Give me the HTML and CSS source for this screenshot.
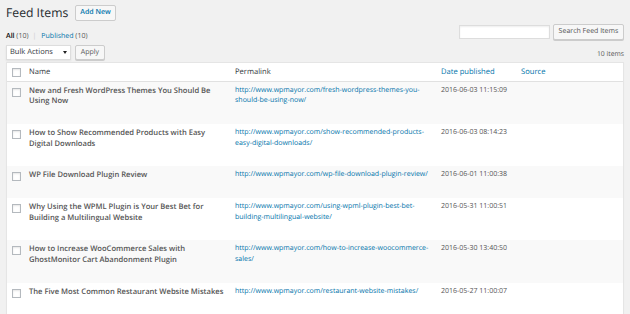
FILE: index.html
```html
<!DOCTYPE html>
<html lang="en">
<head>
<meta charset="utf-8">
<title>Feed Items</title>
<link rel="stylesheet" href="styles.css">
</head>
<body>
<div class="wrap">
  <div class="title-row">
    <h1 class="page-title">Feed Items</h1>
    <a class="title-action" href="#">Add New</a>
  </div>

  <div class="filter-row">
    <ul class="views">
      <li><a class="current" href="#">All <span class="count">(10)</span></a><span class="sep">|</span></li>
      <li><a href="#">Published <span class="count">(10)</span></a></li>
    </ul>
    <form class="search-box">
      <input class="search-input" type="search" aria-label="Search">
      <button class="button search-button" type="button">Search Feed Items</button>
    </form>
  </div>

  <div class="tablenav">
    <div class="bulk">
      <div class="select-wrap">
        <select class="bulk-select" aria-label="Bulk actions">
          <option>Bulk Actions</option>
        </select>
      </div>
      <button class="button apply-button" type="button">Apply</button>
    </div>
    <div class="displaying">10 items</div>
  </div>

  <table class="list-table">
    <colgroup>
      <col class="col-cb">
      <col class="col-name">
      <col class="col-link">
      <col class="col-date">
      <col>
    </colgroup>
    <thead>
      <tr>
        <th class="cb"><input class="check" type="checkbox" aria-label="Select all"></th>
        <th>Name</th>
        <th>Permalink</th>
        <th><a href="#">Date published</a></th>
        <th><a href="#">Source</a></th>
      </tr>
    </thead>
    <tbody>
      <tr>
        <td class="cb"><input class="check" type="checkbox"></td>
        <td class="title">New and Fresh WordPress Themes You Should Be Using Now</td>
        <td class="link"><a href="#">http://www.wpmayor.com/fresh-wordpress-themes-you-should-be-using-now/</a></td>
        <td class="date">2016-06-03 11:15:09</td>
        <td></td>
      </tr>
      <tr>
        <td class="cb"><input class="check" type="checkbox"></td>
        <td class="title">How to Show Recommended Products with Easy Digital Downloads</td>
        <td class="link"><a href="#">http://www.wpmayor.com/show-recommended-products-easy-digital-downloads/</a></td>
        <td class="date">2016-06-03 08:14:23</td>
        <td></td>
      </tr>
      <tr>
        <td class="cb"><input class="check" type="checkbox"></td>
        <td class="title">WP File Download Plugin Review</td>
        <td class="link"><a href="#">http://www.wpmayor.com/wp-file-download-plugin-review/</a></td>
        <td class="date">2016-06-01 11:00:38</td>
        <td></td>
      </tr>
      <tr>
        <td class="cb"><input class="check" type="checkbox"></td>
        <td class="title">Why Using the WPML Plugin is Your Best Bet for Building a Multilingual Website</td>
        <td class="link"><a href="#">http://www.wpmayor.com/using-wpml-plugin-best-bet-building-multilingual-website/</a></td>
        <td class="date">2016-05-31 11:00:51</td>
        <td></td>
      </tr>
      <tr>
        <td class="cb"><input class="check" type="checkbox"></td>
        <td class="title">How to Increase WooCommerce Sales with GhostMonitor Cart Abandonment Plugin</td>
        <td class="link"><a href="#">http://www.wpmayor.com/how-to-increase-woocommerce-sales/</a></td>
        <td class="date">2016-05-30 13:40:50</td>
        <td></td>
      </tr>
      <tr>
        <td class="cb"><input class="check" type="checkbox"></td>
        <td class="title">The Five Most Common Restaurant Website Mistakes</td>
        <td class="link"><a href="#">http://www.wpmayor.com/restaurant-website-mistakes/</a></td>
        <td class="date">2016-05-27 11:00:07</td>
        <td></td>
      </tr>
    </tbody>
  </table>
</div>
</body>
</html>
```

FILE: styles.css
```css
* { box-sizing: border-box; }

html, body {
  margin: 0;
  padding: 0;
  background: #f1f1f1;
}

body {
  font-family: "Open Sans", "Liberation Sans", sans-serif;
  font-size: 7px;
  line-height: 11px;
  color: #444;
  overflow: hidden;
  text-rendering: geometricPrecision;
}

a { color: #0073aa; text-decoration: none; }

.wrap {
  padding: 5px 6px 0 6px;
}

/* title */
.title-row {
  display: flex;
  align-items: center;
  gap: 7px;
  height: 16px;
}

.page-title {
  margin: 0;
  font-size: 12.2px;
  line-height: 16px;
  font-weight: 400;
  color: #23282d;
}

.title-action {
  display: block;
  height: 16px;
  line-height: 14px;
  padding: 0 4px;
  border: 1px solid #ccc;
  border-radius: 2px;
  background: #f7f7f7;
  font-weight: 600;
  font-size: 7px;
  color: #0073aa;
}

/* views + search */
.filter-row {
  display: flex;
  justify-content: space-between;
  align-items: flex-start;
  margin-top: 3px;
  height: 17px;
}

.views {
  list-style: none;
  margin: 0;
  padding: 8px 0 0 0;
  display: flex;
  line-height: 10px;
  color: #666;
}

.views a { color: #0073aa; }
.views a.current { color: #000; font-weight: 600; }
.views .count { color: #555; font-weight: 400; }
.views .sep { color: #ccc; padding: 0 5px 0 4px; }

.search-box {
  display: flex;
  align-items: center;
  gap: 3px;
  margin: 0;
}

.search-input {
  width: 91px;
  height: 14px;
  margin: 0 0 0 1px;
  padding: 0 3px;
  border: 1px solid #ddd;
  background: #fff;
  box-shadow: inset 0 1px 2px rgba(0,0,0,.07);
  font: inherit;
  outline: none;
  -webkit-appearance: none;
  appearance: none;
}

.button {
  height: 16px;
  margin: 0;
  padding: 0 6px;
  border: 1px solid #ccc;
  border-radius: 2px;
  background: #f7f7f7;
  box-shadow: 0 1px 0 #ccc;
  font-family: inherit;
  font-size: 7px;
  line-height: 14px;
  color: #555;
  cursor: pointer;
  text-rendering: geometricPrecision;
}

.search-button { width: 71px; padding: 0; }

/* tablenav */
.tablenav {
  display: flex;
  justify-content: space-between;
  align-items: center;
  margin-top: 4px;
  height: 15px;
}

.bulk {
  display: flex;
  align-items: center;
  gap: 4px;
}

.select-wrap {
  position: relative;
  width: 65px;
  height: 15px;
}

.select-wrap::after {
  content: "";
  position: absolute;
  right: 4px;
  top: 6px;
  border-left: 2.5px solid transparent;
  border-right: 2.5px solid transparent;
  border-top: 3px solid #222;
  pointer-events: none;
}

.bulk-select {
  display: block;
  width: 100%;
  height: 15px;
  margin: 0;
  padding: 0 0 0 3px;
  border: 1px solid #ddd;
  border-radius: 0;
  background: #fff;
  box-shadow: 0 1px 2px rgba(0,0,0,.07);
  font-family: inherit;
  font-size: 7.5px;
  line-height: 13px;
  color: #32373c;
  -webkit-appearance: none;
  appearance: none;
  outline: none;
  text-rendering: geometricPrecision;
}

.apply-button { width: 30px; height: 15px; padding: 0; line-height: 13px; }

.displaying {
  color: #555;
  font-size: 6.8px;
  padding-top: 2px;
}

/* table */
.list-table {
  width: 618px;
  margin-top: 2px;
  border: 1px solid #e5e5e5;
  border-spacing: 0;
  border-collapse: separate;
  table-layout: fixed;
  background: #fff;
  box-shadow: 0 1px 1px rgba(0,0,0,.04);
}

.col-cb { width: 16px; }
.col-name { width: 206px; }
.col-link { width: 206px; }
.col-date { width: 80px; }

.list-table th,
.list-table td {
  text-align: left;
  vertical-align: top;
  padding: 4px 4px 17.4px 6px;
  line-height: 10.4px;
}

.list-table th {
  font-weight: 400;
  font-size: 7.6px;
  line-height: 11px;
  color: #32373c;
  padding-bottom: 3px;
  border-bottom: 1px solid #e1e1e1;
}

.list-table th.cb { padding: 5px 0 0 5px; }
.list-table td.cb { padding: 6px 0 0 5px; }

.list-table tbody tr:nth-child(odd) { background: #f9f9f9; }

.check {
  display: block;
  width: 9px;
  height: 9px;
  margin: 0;
  border: 1px solid #b4b9be;
  border-radius: 0;
  background: #fff;
  box-shadow: inset 0 1px 2px rgba(0,0,0,.1);
  -webkit-appearance: none;
  appearance: none;
}

.list-table td.title {
  font-size: 7.6px;
  font-weight: 600;
  color: #555;
}

.list-table td.link { font-size: 7px; }
.list-table td.date { font-size: 7px; color: #555; }
```
